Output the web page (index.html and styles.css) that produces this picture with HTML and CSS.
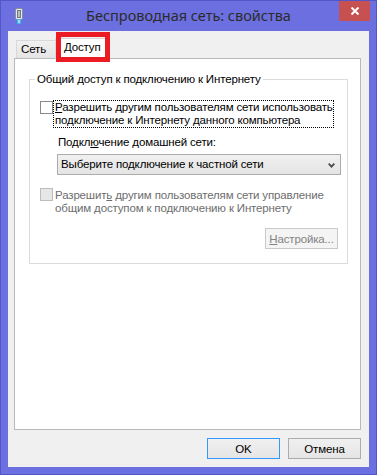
FILE: index.html
```html
<!DOCTYPE html>
<html lang="ru">
<head>
<meta charset="utf-8">
<title>Беспроводная сеть: свойства</title>
<link rel="stylesheet" href="styles.css">
</head>
<body>
<div class="window">
  <div class="titlebar">
    <svg class="app-icon" width="8" height="16" viewBox="0 0 8 16">
      <rect x="0.5" y="0.5" width="7" height="11" rx="1.5" fill="#e9ecef" stroke="#8a9099"/>
      <rect x="2.5" y="2.5" width="3" height="7" fill="#b8bec6" stroke="#6f7680" stroke-width="1"/>
      <rect x="2" y="11" width="4" height="5" fill="#3fb3ec"/>
      <rect x="3" y="12" width="2" height="3" fill="#9fdcf7"/>
    </svg>
    <div class="title">Беспроводная сеть: свойства</div>
    <div class="close">
      <svg width="8" height="8" viewBox="0 0 8 8"><path d="M0.5 0.5 L7.5 7.5 M7.5 0.5 L0.5 7.5" stroke="#fff" stroke-width="2"/></svg>
    </div>
  </div>
  <div class="client">
    <div class="tabs">
      <div class="tab">Сеть</div>
      <div class="tab active">Доступ<span class="highlight"></span></div>
    </div>
    <div class="panel">
      <fieldset class="group">
        <legend>Общий доступ к подключению к Интернету</legend>
        <div class="check-row first">
          <span class="checkbox"></span>
          <span class="check-label focus"><u>Р</u>азрешить другим пользователям сети использовать<br>подключение к Интернету данного компьютера</span>
        </div>
        <div class="sub">
          <div class="sub-label">Подкл<u>ю</u>чение домашней сети:</div>
          <div class="select">
            <span>Выберите подключение к частной сети</span>
            <svg class="chevron" width="7" height="5" viewBox="0 0 7 5"><path d="M0.7 0.7 L3.5 3.6 L6.3 0.7" fill="none" stroke="#4a4a4a" stroke-width="1.8"/></svg>
          </div>
        </div>
        <div class="check-row second disabled">
          <span class="checkbox"></span>
          <span class="check-label">Разрешит<u>ь</u> другим пользователям сети управление<br>общим доступом к подключению к Интернету</span>
        </div>
        <div class="btn-row">
          <div class="button disabled"><u>Н</u>астройка...</div>
        </div>
      </fieldset>
    </div>
    <div class="footer">
      <div class="button default">OK</div>
      <div class="button">Отмена</div>
    </div>
  </div>
</div>
</body>
</html>
```
FILE: styles.css
```css
* { box-sizing: border-box; }
html, body { margin: 0; padding: 0; }
body {
  width: 377px;
  height: 475px;
  font-family: "Liberation Sans", Arial, sans-serif;
  font-size: 11.5px;
  letter-spacing: -0.15px;
  color: #000;
  overflow: hidden;
}
.window {
  width: 377px;
  height: 475px;
  background: #6b6fdf;
  border: 1px solid #5256c9;
  display: flex;
  flex-direction: column;
}
.titlebar {
  height: 30px;
  flex: none;
  display: grid;
  grid-template-columns: 1fr auto 1fr;
  align-items: start;
}
.app-icon {
  margin: 7px 0 0 14px;
  display: block;
}
.title {
  font-family: "Noto Sans", sans-serif;
  font-size: 14.5px;
  letter-spacing: 0;
  line-height: 20px;
  margin-top: 4px;
  color: #2b2b2b;
  white-space: nowrap;
}
.close {
  justify-self: end;
  width: 31px;
  height: 20px;
  margin-right: 6px;
  background: #c75050;
  display: flex;
  align-items: flex-start;
  justify-content: center;
  padding-top: 6px;
}
.close svg { display: block; }
.client {
  flex: 1;
  margin: 0 7px 7px 7px;
  background: #f0f0f0;
  padding: 7px 8px 8px 6px;
  display: flex;
  flex-direction: column;
}
.tabs {
  height: 20px;
  flex: none;
  display: flex;
  align-items: flex-end;
  padding-left: 2px;
  position: relative;
  z-index: 1;
}
.tab {
  height: 18px;
  width: 40px;
  padding-left: 4px;
  border: 1px solid #d9d9d9;
  border-bottom: none;
  background: linear-gradient(#f0f0f0, #e5e5e5);
  line-height: 17px;
  white-space: nowrap;
}
.tab.active {
  position: relative;
  height: 21px;
  width: 53px;
  margin-left: -1px;
  margin-bottom: -1px;
  padding-left: 8px;
  background: #fff;
  border-color: #d9d9d9;
}
.highlight {
  position: absolute;
  left: 0;
  top: -7px;
  width: 54px;
  height: 30px;
  border: 5px solid #ec1c24;
}
.panel {
  flex: 1;
  background: #fff;
  border: 1px solid #b9b9b9;
  display: flex;
  flex-direction: column;
}
.group {
  margin: 13px 12px 0 14px;
  padding: 0 0 14px 0;
  border: 1px solid #dcdcdc;
  min-width: 0;
}
.group legend {
  margin-left: 5px;
  padding: 0 2px;
  line-height: 15px;
}
.check-row {
  display: flex;
  align-items: flex-start;
  padding-left: 10px;
  line-height: 13px;
}
.check-row.first { margin-top: 13px; }
.check-row.second { margin-top: 13px; }
.checkbox {
  width: 13px;
  height: 13px;
  margin-top: 1px;
  border: 1px solid #8a8a8a;
  background: #fff;
  flex: none;
}
.check-label {
  border: 1px solid transparent;
  padding: 0 1px;
  white-space: nowrap;
}
.check-label.focus { border: 1px dotted #000; width: 281px; }
.disabled .checkbox { border-color: #bcbcbc; background: #e6e6e6; margin-top: 0; }
.disabled .check-label { color: #6d6d6d; }
.sub {
  margin: 7px 6px 0 27px;
}
.sub-label {
  line-height: 15px;
  padding-left: 1px;
}
.select {
  margin-top: 4px;
  height: 21px;
  border: 1px solid #acacac;
  background: linear-gradient(#f0f0f0, #e5e5e5);
  padding: 0 5px 0 3px;
  display: flex;
  align-items: center;
  justify-content: space-between;
  line-height: 19px;
}
.chevron { display: block; margin-top: 1px; }
.btn-row {
  display: flex;
  justify-content: flex-end;
  margin: 12px 9px 0 0;
}
.button {
  width: 73px;
  height: 21px;
  border: 1px solid #acacac;
  background: linear-gradient(#f0f0f0, #e5e5e5);
  text-align: center;
  line-height: 20px;
  white-space: nowrap;
}
.button.default { border-color: #3399ff; }
.button.disabled {
  background: #f4f4f4;
  border-color: #c9c9c9;
  color: #838383;
}
.footer {
  flex: none;
  display: flex;
  justify-content: flex-end;
  gap: 8px;
  margin-top: 8px;
}
```
